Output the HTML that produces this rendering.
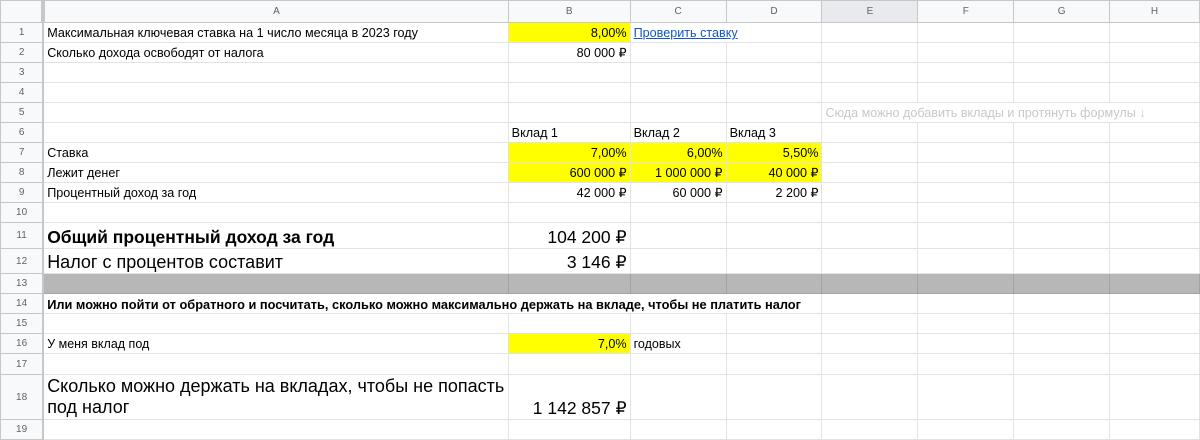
<!DOCTYPE html>
<html><head><meta charset="utf-8"><style>
body{margin:0;background:#fff;width:1200px;height:439px;overflow:hidden;font-family:"Liberation Sans",Arial,sans-serif;}
table{border-collapse:collapse;table-layout:fixed;position:absolute;left:0;top:0;}
td{border:1px solid #e2e3e3;padding:0 3px;font-size:12.6px;color:#000;white-space:nowrap;overflow:hidden;vertical-align:bottom;line-height:17px;}
td.h{background:#f8f9fa;color:#5f6368;font-size:10px;text-align:center;vertical-align:middle;border-color:#c7c7c7;padding:0}
td.n{background:#f8f9fa;color:#5f6368;font-size:10px;text-align:center;vertical-align:middle;border-color:#c7c7c7;border-right:2px solid #c7c7c7;padding:0}
.r{text-align:right}
.y{background:#ffff00}
.g td{background:#b7b7b7;border-color:#a3a3a3}
.g td.n{background:#f8f9fa;border-color:#c7c7c7}
a{color:#1155cc;text-decoration:underline}
</style></head><body>
<table>
<colgroup><col style="width:43px"><col style="width:465px"><col style="width:122px"><col style="width:96px"><col style="width:96px"><col style="width:96px"><col style="width:96px"><col style="width:96px"><col style="width:90px"></colgroup>
<tr style="height:22px"><td class="h" style="border-right:4px solid #c7c7c7"></td><td class="h">A</td><td class="h">B</td><td class="h">C</td><td class="h">D</td><td class="h" style="background:#e8eaed">E</td><td class="h">F</td><td class="h">G</td><td class="h">H</td></tr>
<tr style="height:20px"><td class="n">1</td><td>Максимальная ключевая ставка на 1 число месяца в 2023 году</td><td class="r y">8,00%</td><td colspan="2"><a>Проверить ставку</a></td><td></td><td></td><td></td><td></td></tr>
<tr style="height:20px"><td class="n">2</td><td>Сколько дохода освободят от налога</td><td class="r">80 000 ₽</td><td></td><td></td><td></td><td></td><td></td><td></td></tr>
<tr style="height:20px"><td class="n">3</td><td></td><td></td><td></td><td></td><td></td><td></td><td></td><td></td></tr>
<tr style="height:20px"><td class="n">4</td><td></td><td></td><td></td><td></td><td></td><td></td><td></td><td></td></tr>
<tr style="height:20px"><td class="n">5</td><td></td><td></td><td></td><td></td><td colspan="4" style="color:#c8c8c8">Сюда можно добавить вклады и протянуть формулы ↓</td></tr>
<tr style="height:20px"><td class="n">6</td><td></td><td>Вклад 1</td><td>Вклад 2</td><td>Вклад 3</td><td></td><td></td><td></td><td></td></tr>
<tr style="height:20px"><td class="n">7</td><td>Ставка</td><td class="r y">7,00%</td><td class="r y">6,00%</td><td class="r y">5,50%</td><td></td><td></td><td></td><td></td></tr>
<tr style="height:20px"><td class="n">8</td><td>Лежит денег</td><td class="r y">600 000 ₽</td><td class="r y">1 000 000 ₽</td><td class="r y">40 000 ₽</td><td></td><td></td><td></td><td></td></tr>
<tr style="height:20px"><td class="n">9</td><td>Процентный доход за год</td><td class="r">42 000 ₽</td><td class="r">60 000 ₽</td><td class="r">2 200 ₽</td><td></td><td></td><td></td><td></td></tr>
<tr style="height:20px"><td class="n">10</td><td></td><td></td><td></td><td></td><td></td><td></td><td></td><td></td></tr>
<tr style="height:26px"><td class="n">11</td><td style="font-size:17.5px;font-weight:bold;line-height:22px">Общий процентный доход за год</td><td class="r" style="font-size:17.5px;line-height:22px">104 200 ₽</td><td></td><td></td><td></td><td></td><td></td><td></td></tr>
<tr style="height:25px"><td class="n">12</td><td style="font-size:18px;line-height:22px">Налог с процентов составит</td><td class="r" style="font-size:17.5px;line-height:22px">3 146 ₽</td><td></td><td></td><td></td><td></td><td></td><td></td></tr>
<tr style="height:20px" class="g"><td class="n">13</td><td></td><td></td><td></td><td></td><td></td><td></td><td></td><td></td></tr>
<tr style="height:20px"><td class="n">14</td><td colspan="4" style="font-size:12.8px;font-weight:bold">Или можно пойти от обратного и посчитать, сколько можно максимально держать на вкладе, чтобы не платить налог</td><td></td><td></td><td></td><td></td></tr>
<tr style="height:20px"><td class="n">15</td><td></td><td></td><td></td><td></td><td></td><td></td><td></td><td></td></tr>
<tr style="height:20px"><td class="n">16</td><td style="font-size:12.5px">У меня вклад под</td><td class="r y">7,0%</td><td style="font-size:12.5px">годовых</td><td></td><td></td><td></td><td></td><td></td></tr>
<tr style="height:21px"><td class="n">17</td><td></td><td></td><td></td><td></td><td></td><td></td><td></td><td></td></tr>
<tr style="height:45px"><td class="n">18</td><td style="font-size:18px;line-height:21px;padding-bottom:1px">Сколько можно держать на вкладах, чтобы не попасть<br>под налог</td><td class="r" style="font-size:17.5px;line-height:22px">1 142 857 ₽</td><td></td><td></td><td></td><td></td><td></td><td></td></tr>
<tr style="height:20px"><td class="n">19</td><td></td><td></td><td></td><td></td><td></td><td></td><td></td><td></td></tr>
</table>
</body></html>
